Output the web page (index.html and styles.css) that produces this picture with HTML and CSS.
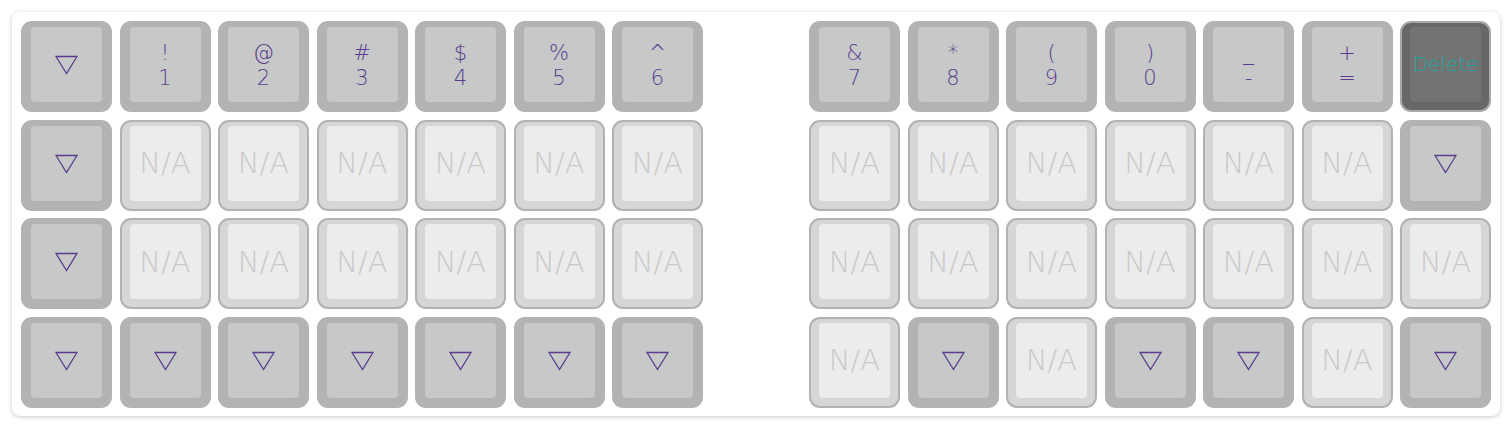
FILE: index.html
```html
<!DOCTYPE html>
<html>
<head>
<meta charset="utf-8">
<link rel="stylesheet" href="styles.css">
</head>
<body>
<div class="board">
  <div class="key trn"><div class="cap"><svg class="tri" viewBox="0 0 23 20"><polygon points="1,1.5 22,1.5 11.5,18.5"/></svg></div></div>
  <div class="key"><div class="cap"><span>!</span><span>1</span></div></div>
  <div class="key"><div class="cap"><span>@</span><span>2</span></div></div>
  <div class="key"><div class="cap"><span>#</span><span>3</span></div></div>
  <div class="key"><div class="cap"><span>$</span><span>4</span></div></div>
  <div class="key"><div class="cap"><span>%</span><span>5</span></div></div>
  <div class="key"><div class="cap"><span>^</span><span>6</span></div></div>
  <div class="gap"></div>
  <div class="key"><div class="cap"><span>&amp;</span><span>7</span></div></div>
  <div class="key"><div class="cap"><span>*</span><span>8</span></div></div>
  <div class="key"><div class="cap"><span>(</span><span>9</span></div></div>
  <div class="key"><div class="cap"><span>)</span><span>0</span></div></div>
  <div class="key"><div class="cap"><span>_</span><span>-</span></div></div>
  <div class="key"><div class="cap"><span>+</span><span>=</span></div></div>
  <div class="key del"><div class="cap">Delete</div></div>

  <div class="key trn"><div class="cap"><svg class="tri" viewBox="0 0 23 20"><polygon points="1,1.5 22,1.5 11.5,18.5"/></svg></div></div>
  <div class="key na"><div class="cap">N/A</div></div>
  <div class="key na"><div class="cap">N/A</div></div>
  <div class="key na"><div class="cap">N/A</div></div>
  <div class="key na"><div class="cap">N/A</div></div>
  <div class="key na"><div class="cap">N/A</div></div>
  <div class="key na"><div class="cap">N/A</div></div>
  <div class="gap"></div>
  <div class="key na"><div class="cap">N/A</div></div>
  <div class="key na"><div class="cap">N/A</div></div>
  <div class="key na"><div class="cap">N/A</div></div>
  <div class="key na"><div class="cap">N/A</div></div>
  <div class="key na"><div class="cap">N/A</div></div>
  <div class="key na"><div class="cap">N/A</div></div>
  <div class="key trn"><div class="cap"><svg class="tri" viewBox="0 0 23 20"><polygon points="1,1.5 22,1.5 11.5,18.5"/></svg></div></div>

  <div class="key trn"><div class="cap"><svg class="tri" viewBox="0 0 23 20"><polygon points="1,1.5 22,1.5 11.5,18.5"/></svg></div></div>
  <div class="key na"><div class="cap">N/A</div></div>
  <div class="key na"><div class="cap">N/A</div></div>
  <div class="key na"><div class="cap">N/A</div></div>
  <div class="key na"><div class="cap">N/A</div></div>
  <div class="key na"><div class="cap">N/A</div></div>
  <div class="key na"><div class="cap">N/A</div></div>
  <div class="gap"></div>
  <div class="key na"><div class="cap">N/A</div></div>
  <div class="key na"><div class="cap">N/A</div></div>
  <div class="key na"><div class="cap">N/A</div></div>
  <div class="key na"><div class="cap">N/A</div></div>
  <div class="key na"><div class="cap">N/A</div></div>
  <div class="key na"><div class="cap">N/A</div></div>
  <div class="key na"><div class="cap">N/A</div></div>

  <div class="key trn"><div class="cap"><svg class="tri" viewBox="0 0 23 20"><polygon points="1,1.5 22,1.5 11.5,18.5"/></svg></div></div>
  <div class="key trn"><div class="cap"><svg class="tri" viewBox="0 0 23 20"><polygon points="1,1.5 22,1.5 11.5,18.5"/></svg></div></div>
  <div class="key trn"><div class="cap"><svg class="tri" viewBox="0 0 23 20"><polygon points="1,1.5 22,1.5 11.5,18.5"/></svg></div></div>
  <div class="key trn"><div class="cap"><svg class="tri" viewBox="0 0 23 20"><polygon points="1,1.5 22,1.5 11.5,18.5"/></svg></div></div>
  <div class="key trn"><div class="cap"><svg class="tri" viewBox="0 0 23 20"><polygon points="1,1.5 22,1.5 11.5,18.5"/></svg></div></div>
  <div class="key trn"><div class="cap"><svg class="tri" viewBox="0 0 23 20"><polygon points="1,1.5 22,1.5 11.5,18.5"/></svg></div></div>
  <div class="key trn"><div class="cap"><svg class="tri" viewBox="0 0 23 20"><polygon points="1,1.5 22,1.5 11.5,18.5"/></svg></div></div>
  <div class="gap"></div>
  <div class="key na"><div class="cap">N/A</div></div>
  <div class="key trn"><div class="cap"><svg class="tri" viewBox="0 0 23 20"><polygon points="1,1.5 22,1.5 11.5,18.5"/></svg></div></div>
  <div class="key na"><div class="cap">N/A</div></div>
  <div class="key trn"><div class="cap"><svg class="tri" viewBox="0 0 23 20"><polygon points="1,1.5 22,1.5 11.5,18.5"/></svg></div></div>
  <div class="key trn"><div class="cap"><svg class="tri" viewBox="0 0 23 20"><polygon points="1,1.5 22,1.5 11.5,18.5"/></svg></div></div>
  <div class="key na"><div class="cap">N/A</div></div>
  <div class="key trn"><div class="cap"><svg class="tri" viewBox="0 0 23 20"><polygon points="1,1.5 22,1.5 11.5,18.5"/></svg></div></div>
</div>
</body>
</html>
```

FILE: styles.css
```css
html, body {
  margin: 0;
  background: #ffffff;
}
body {
  padding: 12px;
  font-family: "DejaVu Sans", "Noto Sans", sans-serif;
  font-weight: 200;
}
.board {
  width: 1488px;
  height: 404px;
  box-sizing: border-box;
  padding: 9px;
  background: #ffffff;
  border-radius: 8px;
  box-shadow: 0 1px 4px rgba(0, 0, 0, 0.22);
  display: grid;
  grid-template-columns: repeat(15, 91px);
  grid-template-rows: repeat(4, 91px);
  column-gap: 7.5px;
  row-gap: 7.5px;
}
.key {
  box-sizing: border-box;
  border-radius: 11px;
  background: #b3b3b3;
  padding: 6px 10px 10px 10px;
  display: flex;
}
.cap {
  flex: 1;
  border-radius: 4px;
  background: #c7c8c8;
  display: flex;
  flex-direction: column;
  align-items: center;
  justify-content: center;
  color: #5a3d8e;
  font-size: 21px;
  line-height: 24.5px;
}
.cap span:first-child {
  margin-top: 2px;
}
.tri {
  width: 23px;
  height: 20px;
  margin-top: 1px;
}
.tri polygon {
  fill: none;
  stroke: #5a3d8e;
  stroke-width: 1.3;
  stroke-linejoin: miter;
}
.na {
  background: #d6d6d6;
  border: 2px solid #b2b2b2;
  padding: 4px 8px 8px 8px;
}
.na .cap {
  background: #ececec;
  color: #c9c9c9;
  font-size: 29px;
  line-height: 32px;
}
.del {
  background: #666766;
  border: 2px solid #a8a8a8;
  padding: 4px 8px 8px 8px;
}
.del .cap {
  background: #727372;
  color: #19a7a6;
  font-size: 20px;
}
```
